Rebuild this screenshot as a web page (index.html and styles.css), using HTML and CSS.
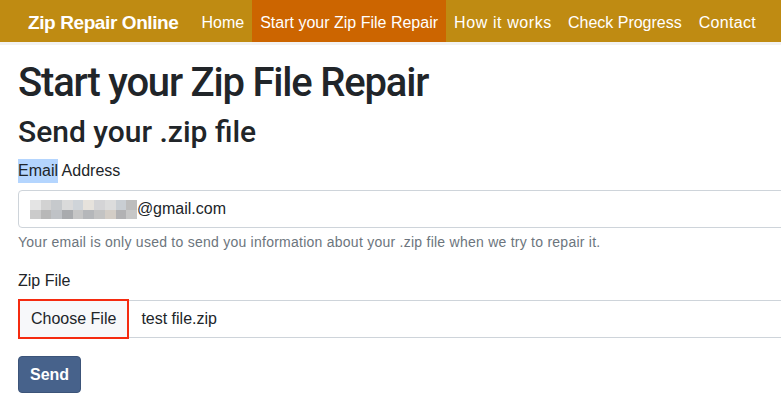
FILE: index.html
```html
<!DOCTYPE html>
<html>
<head>
<meta charset="utf-8">
<link rel="stylesheet" href="styles.css">
</head>
<body>
<nav class="navbar">
  <a class="brand" href="#">Zip Repair Online</a>
  <ul class="nav">
    <li><a href="#">Home</a></li>
    <li class="active"><a href="#">Start your Zip File Repair</a></li>
    <li><a class="wide" href="#">How it works</a></li>
    <li><a href="#">Check Progress</a></li>
    <li><a class="wider" href="#">Contact</a></li>
  </ul>
</nav>
<main class="content">
  <h1 class="title">Start your Zip File Repair</h1>
  <h2 class="subtitle">Send your .zip file</h2>
  <form class="form">
    <div class="group">
      <label class="label"><span class="sel">Email</span> Address</label>
      <div class="input"><span class="blur"><i style="background:#e4e4e4"></i><i style="background:#d2d2d2"></i><i style="background:#c6c9cc"></i><i style="background:#dadada"></i><i style="background:#cfd4d9"></i><i style="background:#e6e2dc"></i><i style="background:#d4d4d6"></i><i style="background:#dcdcdc"></i><i style="background:#c9ced3"></i><i style="background:#bdbdbd"></i><i style="background:#cbcbcb"></i><i style="background:#b8b8b8"></i><i style="background:#bfc2c6"></i><i style="background:#a9abae"></i><i style="background:#c6c6c6"></i><i style="background:#b5b7ba"></i><i style="background:#c3c3c3"></i><i style="background:#d3cdc6"></i><i style="background:#b2b2b4"></i><i style="background:#c7c7c7"></i></span>@gmail.com</div>
      <small class="help">Your email is only used to send you information about your .zip file when we try to repair it.</small>
    </div>
    <div class="group">
      <label class="label">Zip File</label>
      <div class="file">
        <span class="choose">Choose File</span>
        <span class="fname">test file.zip</span>
      </div>
    </div>
    <button class="send" type="button">Send</button>
  </form>
</main>
</body>
</html>
```

FILE: styles.css
```css
* { box-sizing: border-box; }
html, body { margin: 0; padding: 0; }
body {
  font-family: "Liberation Sans", Arial, sans-serif;
  color: #212529;
  background: #fff;
  overflow: hidden;
  width: 781px;
}
.navbar {
  display: flex;
  align-items: stretch;
  height: 45px;
  background: #bf8b12;
  border-bottom: 3px solid #f2f2f2;
  padding-left: 28px;
}
.brand {
  display: flex;
  align-items: center;
  padding-top: 3px;
  color: #fff;
  text-decoration: none;
  font-size: 19px;
  font-weight: 700;
  letter-spacing: -0.4px;
  margin-right: 15px;
}
.nav {
  display: flex;
  list-style: none;
  margin: 0;
  padding: 0;
}
.nav li { display: flex; }
.nav a {
  display: flex;
  align-items: center;
  padding: 3px 8px 0;
  color: #fff;
  text-decoration: none;
  font-size: 16px;
  white-space: nowrap;
}
.nav a.wide { letter-spacing: 0.6px; }
.nav a.wider { letter-spacing: 0.3px; margin-left: 1px; }
.nav li.active a { background: #cc6500; }
.content {
  padding: 0 0 0 18px;
}
.title, .subtitle {
  font-family: Roboto, "Liberation Sans", sans-serif;
  font-weight: 500;
}
.title {
  font-size: 40px;
  letter-spacing: -1.2px;
  margin: 14px 0 0;
  line-height: 48px;
}
.subtitle {
  font-size: 30px;
  letter-spacing: 0;
  margin: 6px 0 0;
  line-height: 38px;
}
.form { margin-top: 8px; }
.group { margin-bottom: 17px; }
.group + .group { margin-bottom: 18px; }
.label {
  display: block;
  font-size: 16px;
  line-height: 24px;
  margin-bottom: 7px;
}
.sel {
  display: inline-block;
  height: 24px;
  background: #b4d5fe;
}
.input {
  width: 800px;
  height: 38px;
  border: 1px solid #ced4da;
  border-radius: 4px;
  display: flex;
  align-items: center;
  padding: 0 12px 0 11px;
  font-size: 16px;
  color: #212529;
}
.blur {
  display: grid;
  grid-template-columns: repeat(10, 10.7px);
  grid-template-rows: 9.5px 9.5px;
  margin-top: 1px;
}
.blur i { display: block; }
.help {
  display: block;
  margin-top: 4px;
  font-size: 14px;
  line-height: 20px;
  letter-spacing: 0.25px;
  color: #6c757d;
}
.file {
  width: 800px;
  height: 38px;
  border-top: 1px solid #ced4da;
  border-bottom: 1px solid #ced4da;
  display: flex;
  align-items: center;
  font-size: 16px;
}
.choose {
  display: flex;
  align-items: center;
  height: 40px;
  margin: -1px 0;
  padding: 0 11px;
  background: #f7f8fa;
  border: 2px solid #f52b10;
  font-size: 16px;
  color: #212529;
}
.fname { margin-left: 12px; }
.send {
  display: block;
  margin: 0;
  background: #47628b;
  color: #fff;
  border: 1px solid #3c5479;
  border-radius: 4px;
  font-family: inherit;
  font-size: 16px;
  font-weight: 700;
  height: 37px;
  padding: 0 11px;
}
```
